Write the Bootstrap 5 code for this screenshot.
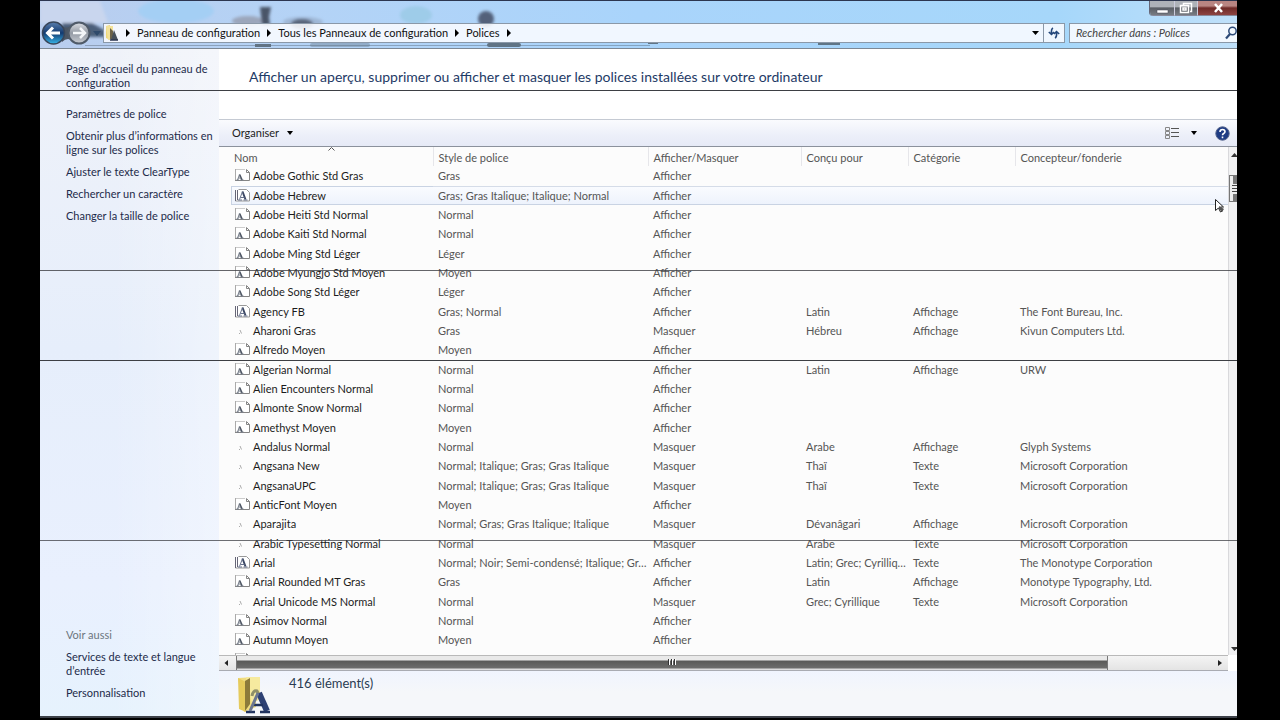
<!DOCTYPE html>
<html lang="fr">
<head>
<meta charset="utf-8">
<meta name="viewport" content="width=device-width, initial-scale=1">
<title>Polices</title>
<link href="https://cdn.jsdelivr.net/npm/bootstrap@5.3.0/dist/css/bootstrap.min.css" rel="stylesheet">
<style>
  body { background: #000; font-family: Lato, "Open Sans", sans-serif; font-size: 11px; line-height: 14px; color: #1c1c1c; }
  a { color: #1d2b4a; text-decoration: none; }
  a:hover { text-decoration: underline; }
  svg { display: block; flex: none; }
  button { border: 0; background: none; padding: 0; color: inherit; }
  .stage { padding: 0 43px 0 40px; }
  .win { background: #fff; border-top: 1px solid #2c3650; border-bottom: 2px solid #3c4048; margin-bottom: 2px; min-height: 0; }
  .fit { min-height: 0; min-width: 0; }
  .win-top { background: linear-gradient(90deg, #b9cdee 0, #b4d3f6 22%, #a9d4fb 50%, #a6d7fa 85%, #bfe0fa 100%); border-bottom: 1px solid #7d8894; padding: 22px 0 5px; }
  .aero { inset: 0; width: 100%; height: 100%; }
  .caption { top: 0; right: 0; height: 15px; border-left: 1px solid #667; border-radius: 0 0 0 4px; overflow: hidden; }
  .caption button { border-right: 1px solid #ccd; border-bottom: 1px solid #889; background: linear-gradient(#aeb2b8 0 40%, #5b5f66 50%, #777b82); width: 25px; }
  .caption .mid { width: 23px; }
  .caption .close { width: 39px; border-right: 0; background: linear-gradient(#b98582 0 35%, #6f2a28 50%, #8d4441); }
  .bar { height: 20px; background: rgba(250, 252, 255, .88); border: 1px solid #8a98a8; }
  .crumbs { gap: 7px; margin: 0; padding: 0; list-style: none; }
  .crumbs a { color: #111; }
  .crumbs li { gap: 7px; }
  .go { width: 21px; border-left: 1px solid #8a98a8; }
  .search { width: 168px; border-right: 0; }
  .search input { border: 0; background: none; min-width: 0; padding: 0 0 0 6px; font-style: italic; color: #444; outline: 0; }
  .search input::placeholder { color: #444; opacity: 1; }
  .side { width: 179px; padding: 13px 6px 16px 26px; background: linear-gradient(90deg, rgba(255,255,255,0) 40%, rgba(255,255,255,.35)), linear-gradient(#eff2f9, #e6eefb 45%, #e9f0fe 80%, #e6f2fd); }
  .side nav { gap: 8px; }
  .home { margin-bottom: 9px; }
  .heading { font-size: 14px; line-height: 20px; color: #1e3a66; margin: 0; padding: 18px 30px 32px; font-weight: 400; }
  .tools { height: 29px; border-top: 1px solid #c5cad3; border-bottom: 1px solid #8b919c; background: linear-gradient(#fafbfe, #eceff9 60%, #e6eaf6); padding: 0 7px 0 13px; }
  .help { margin-left: 14px; }
  .view { background: #fcfcfc; }
  .fonts { table-layout: fixed; width: 100%; }
  .fonts th { height: 19px; padding: 3px 0 0 5px; font-weight: 400; color: #555; border-right: 1px solid #e6e6ea; line-height: 14px; position: relative; }
  .fonts th:last-child { border-right: 0; }
  .fonts th:first-child { padding-left: 15px; }
  .fonts td { height: 19px; padding: 0 0 0 5px; color: #555; white-space: nowrap; overflow: hidden; text-overflow: ellipsis; line-height: 14px; vertical-align: middle; }
  .fonts tbody tr:nth-child(3n+1) td { height: 20px; }
  .fonts td:first-child { padding-left: 16px; color: #1c1c1c; }
  .fonts .hot td { background: linear-gradient(#fafcff, #edf2fc); box-shadow: inset 0 1px #d5dce8, inset 0 -1px #c9d3e3; }
  .fonts .hot td:first-child { background: linear-gradient(#fafcff, #edf2fc) 12px 0 no-repeat; box-shadow: none; }
  .hot .cell { margin-left: -4px; padding-left: 3px; border: 1px solid #c9d3e3; border-width: 1px 0 1px 1px; height: 19px; }
  .cell { gap: 3px; }
  .c1 { width: 214px; } .c2 { width: 215px; } .c3 { width: 153px; } .c4, .c5 { width: 107px; }
  .sort { left: 109px; top: 0; }
  .vbar { width: 9px; background: #f1f1f2; border-left: 1px solid #d9d9dc; padding: 6px 0 4px; overflow: hidden; }
  .vthumb { height: 27px; margin-top: 18px; border: 1px solid #777; border-right: 0; background: linear-gradient(90deg, #eee 40%, #777 50%); }
  .hbar { height: 16px; border-top: 1px solid #b9b9b9; border-bottom: 1px solid #a9abb2; background: linear-gradient(#f4f4f4, #e4e4e4); margin-right: 9px; }
  .hthumb { width: 872px; height: 14px; background: linear-gradient(#e9e9e9 0 4px, #5a5a58 5px, #6d6d6c 12px, #ddd 13px); border: solid #777; border-width: 0 1px; }
  .details { background: linear-gradient(#f0f4fe, #f5f7fa 45%); padding: 3px 18px 0; gap: 18px; height: 46px; font-size: 13px; color: #2a3c52; line-height: 18px; }
  .scan { left: 40px; right: 43px; height: 1px; background: #3d3f44; }
  .scan-a { top: 12.5%; } .scan-b { top: 37.5%; opacity: .8; } .scan-c { top: 50%; } .scan-d { top: 75%; opacity: .75; }
  .pointer { top: 197px; right: 12px; }
</style>
</head>
<body>
<div class="stage vh-100 d-flex flex-column position-relative">
<div class="win position-relative flex-fill d-flex flex-column overflow-hidden">

  <header class="win-top position-relative">
    <svg class="aero position-absolute" viewBox="0 0 1197 47" preserveAspectRatio="none" aria-hidden="true">
      <defs><filter id="soft" x="-30%" y="-30%" width="160%" height="160%"><feGaussianBlur stdDeviation="1.6"/></filter></defs>
      <g filter="url(#soft)">
        <path d="M0 0h60l8 22H0z" fill="#c9d6ee"/>
        <ellipse cx="136" cy="10" rx="38" ry="12" fill="#a4cff4"/>
        <ellipse cx="208" cy="20" rx="16" ry="5" fill="#9ba6bb"/>
        <path d="M220 6h11l-2 10 1 8h-8z" fill="#4a5468"/>
        <ellipse cx="263" cy="21" rx="20" ry="5" fill="#8fa4c0" opacity=".6"/>
        <ellipse cx="262" cy="23" rx="11" ry="5" fill="#58657a"/>
        <circle cx="446" cy="18" r="8" fill="#53617a"/>
        <ellipse cx="376" cy="14" rx="16" ry="9" fill="#93c7e0" opacity=".6"/>
        <path d="M22 22h30l14 8v6H22z" fill="#4c5f7a"/>
      </g>
      <g fill="#47545f" opacity=".75">
        <path d="M215 43h16v3h-16z"/>
        <rect x="45" y="44" width="565" height="1" opacity=".5"/>
        <rect x="447" y="42" width="34" height="4" rx="2"/>
        <rect x="608" y="41" width="10" height="2"/><rect x="778" y="41" width="22" height="3"/>
        <rect x="270" y="42" width="60" height="4" rx="2" opacity=".4"/>
      </g>
    </svg>
    <div class="caption position-absolute d-flex">
      <button type="button" aria-label="Réduire"><svg width="24" height="14"><path d="M7 9h11v3H7z" fill="#fff" stroke="#445" stroke-width=".5"/></svg></button>
      <button type="button" class="mid" aria-label="Restaurer"><svg width="22" height="14"><g fill="none" stroke="#fff" stroke-width="1.5"><path d="M8.500 4V2.500h8v8H15"/><rect x="5.500" y="4.500" width="8" height="7"/><path d="M8 7h3v2H8z"/></g></svg></button>
      <button type="button" class="close" aria-label="Fermer"><svg width="38" height="14"><path d="M17 3l7 8M24 3l-7 8" stroke="#fff" stroke-width="2.500"/></svg></button>
    </div>
    <div class="position-relative d-flex align-items-center">
      <svg width="63" height="20" overflow="visible" role="img" aria-label="Précédent et suivant">
        <defs><linearGradient id="bk" x2="0" y2="1"><stop offset="0" stop-color="#5b7fae"/><stop offset=".5" stop-color="#123a70"/><stop offset="1" stop-color="#38b6ea"/></linearGradient>
        <linearGradient id="fw" x2="0" y2="1"><stop offset="0" stop-color="#dcdfe4"/><stop offset=".5" stop-color="#949aa4"/><stop offset="1" stop-color="#c8ccd2"/></linearGradient></defs>
        <path d="M22 3q6 4 12-2v18q-6-6-12 0z" fill="#4b5664"/>
        <circle cx="13.500" cy="10" r="11" fill="url(#bk)" stroke="#39465a" stroke-width="1.500"/>
        <path d="M20 10H8M13 4.500L7.500 10l5.500 5.500" fill="none" stroke="#fff" stroke-width="3"/>
        <circle cx="39" cy="10" r="10.500" fill="url(#fw)" stroke="#4f5a68" stroke-width="2"/>
        <path d="M33 10h11M40 5l5 5-5 5" fill="none" stroke="#f4f6f8" stroke-width="2.500"/>
        <path d="M53 8h8l-4 5z" fill="#2f4a6c"/>
      </svg>
      <nav class="bar d-flex align-items-stretch flex-fill" aria-label="Adresse">
        <div class="d-flex align-items-center flex-fill">
          <svg class="me-2" width="14" height="18"><path d="M2 2l4-1v15l-4-2z" fill="#efd878"/><path d="M2 2h7v12l-5 2z" fill="#f3e29a"/><path d="M6 4v11l3 1V7z" fill="#6b624a"/><path d="M7 16l3-10 4 10z" fill="#46505c"/><path d="M6 16h8" stroke="#2b3550" stroke-width="1.500"/></svg>
          <ol class="crumbs d-flex align-items-center">
            <li class="d-flex align-items-center"><svg width="4" height="8"><path d="M0 0l4 4-4 4z"/></svg><a href="#">Panneau de configuration</a></li>
            <li class="d-flex align-items-center"><svg width="4" height="8"><path d="M0 0l4 4-4 4z"/></svg><a href="#">Tous les Panneaux de configuration</a></li>
            <li class="d-flex align-items-center"><svg width="4" height="8"><path d="M0 0l4 4-4 4z"/></svg><a href="#">Polices</a></li>
            <li><svg width="4" height="8"><path d="M0 0l4 4-4 4z"/></svg></li>
          </ol>
          <button type="button" class="ms-auto me-1" aria-label="Emplacements précédents"><svg width="7" height="4"><path d="M0 0h7L3.500 4z"/></svg></button>
        </div>
        <button type="button" class="go d-flex align-items-center justify-content-center" aria-label="Actualiser"><svg width="12" height="12" fill="none" stroke="#24477a" stroke-width="1.600"><path d="M5 1Q3 2 3.500 7M.8 5l2.700 2.500L6 5M7 11q2-1 1.500-6M6 7l2.500-2.500L11.200 7"/></svg></button>
      </nav>
      <label class="bar search d-flex align-items-center ms-1">
        <input class="flex-fill" type="search" placeholder="Rechercher dans : Polices" aria-label="Rechercher dans : Polices">
        <svg width="12" height="14" fill="none" stroke="#2c4a78"><circle cx="7.500" cy="5" r="3.700" stroke-width="1.500"/><path d="M5 8l-4 4.500" stroke-width="2.200"/></svg>
      </label>
    </div>
  </header>

  <div class="d-flex flex-fill fit">
    <aside class="side flex-shrink-0 d-flex flex-column justify-content-between">
      <nav class="d-flex flex-column" aria-label="Tâches">
        <a class="home" href="#">Page d’accueil du panneau de configuration</a>
        <a href="#">Paramètres de police</a>
        <a href="#">Obtenir plus d’informations en ligne sur les polices</a>
        <a href="#">Ajuster le texte ClearType</a>
        <a href="#">Rechercher un caractère</a>
        <a href="#">Changer la taille de police</a>
      </nav>
      <nav class="d-flex flex-column" aria-label="Voir aussi">
        <span class="text-secondary">Voir aussi</span>
        <a href="#">Services de texte et langue d’entrée</a>
        <a href="#">Personnalisation</a>
      </nav>
    </aside>

    <main class="flex-fill d-flex flex-column fit">
      <h1 class="heading">Afficher un aperçu, supprimer ou afficher et masquer les polices installées sur votre ordinateur</h1>
      <div class="tools d-flex align-items-center">
        <button type="button" class="d-flex align-items-center gap-2">Organiser <svg width="6" height="4"><path d="M0 0h6L3 4z"/></svg></button>
        <button type="button" class="ms-auto d-flex align-items-center" aria-label="Affichage">
          <svg width="15" height="12" fill="none" stroke="#555"><path d="M.5.500h4v3h-4zM.5 4.500h4v3h-4zM.5 8.500h4v3h-4z" stroke="#888"/><path d="M6 1.500h8M6 5.500h8M6 9.500h8"/></svg>
          <svg class="ms-2" width="13" height="4"><path d="M3 0h6L6 4z"/></svg>
        </button>
        <button type="button" class="help" aria-label="Aide"><svg width="15" height="15"><circle cx="7.500" cy="7.500" r="6.700" fill="#1f3c84" stroke="#56658c"/><path d="M5 6q0-2.500 2.500-2.500T10 5.800q0 1-1.300 1.700T7.500 9.300M7.500 10.500v1.700" fill="none" stroke="#fff" stroke-width="1.600"/></svg></button>
      </div>
      <div class="view d-flex flex-fill fit">
        <div class="flex-fill overflow-hidden">
          <table class="fonts">
            <colgroup><col class="c1"><col class="c2"><col class="c3"><col class="c4"><col class="c5"><col></colgroup>
            <thead><tr><th scope="col">Nom<svg class="sort position-absolute" width="7" height="4"><path d="M.5 3.500l3-3 3 3" fill="none" stroke="#555"/></svg></th><th scope="col">Style de police</th><th scope="col">Afficher/Masquer</th><th scope="col">Conçu pour</th><th scope="col">Catégorie</th><th scope="col">Concepteur/fonderie</th></tr></thead>
            <tbody id="rows"></tbody>
          </table>
        </div>
        <div class="vbar flex-shrink-0 d-flex flex-column" aria-hidden="true">
          <svg width="8" height="4"><path d="M2 4l3.500-4L9 4z" fill="#333"/></svg>
          <div class="vthumb"><svg width="8" height="25"><path d="M0 8h8v10H0z" fill="#eee"/><path d="M2 9.500h6M2 12.500h6M2 15.500h6" stroke="#444"/></svg></div>
          <svg class="mt-auto" width="8" height="4"><path d="M2 0h7L5.500 4z" fill="#333"/></svg>
        </div>
      </div>
      <div class="hbar d-flex align-items-center" aria-hidden="true">
        <svg width="17" height="8"><path d="M9 1v6L5.500 4z" fill="#222"/></svg>
        <div class="hthumb d-flex justify-content-center"><svg width="9" height="10"><path d="M1.500 3v6M4.500 3v6M7.500 3v6" stroke="#fff"/><path d="M.5 3v6M3.500 3v6M6.500 3v6" stroke="#333"/></svg></div>
        <svg class="ms-auto me-1" width="8" height="8"><path d="M2 1v6l4-3z" fill="#222"/></svg>
      </div>
      <footer class="details d-flex">
        <svg width="34" height="40">
          <path d="M1 4l18-1v30L7 38z" fill="#f0dc80"/><path d="M9 3h14v22l-8 5z" fill="#f6ea9f"/>
          <path d="M1 4l8 4v30l-7-3z" fill="#e6cb5c"/><path d="M8 7l5-3v26l-5 7z" fill="#8c7a3a"/>
          <path d="M15 22q1-6 5-5l4 8" fill="none" stroke="#8f8f68" stroke-width="3"/>
          <path d="M22 19l8 18" fill="none" stroke="#2e4173" stroke-width="6"/><path d="M9 38h9M23 38h10M16 31h10" stroke="#22345f" stroke-width="2.500"/><path d="M21 19l-8 18" stroke="#6b7690" stroke-width="3"/>
        </svg>
        <span>416 élément(s)</span>
      </footer>
    </main>
  </div>
  <svg class="pointer position-absolute" width="12" height="16"><path d="M2.500 1.500v11l3-2.500 2 4 2-1-2-4h3z" fill="#fff" stroke="#222"/><path d="M6 8l5 3-2 3-3-3z" fill="#555"/></svg>
</div>
<div class="scan scan-a position-absolute"></div><div class="scan scan-b position-absolute"></div><div class="scan scan-c position-absolute"></div><div class="scan scan-d position-absolute"></div>
</div>

<svg width="0" height="0" class="position-absolute" aria-hidden="true">
  <symbol id="one" viewBox="0 0 15 14"><path d="M.5.500h10l4 3.500v8H.5z" fill="#fff"/><path d="M1 .5h9" stroke="#ccc"/><path d="M.5 0v12" stroke="#aaa"/><path d="M0 11.500h14.500V3.500L11.500.500v3h3" fill="none" stroke="#858585"/><path d="M4.500 5.500l2.500 5.500" fill="none" stroke="#4c5462" stroke-width="1.800"/><path d="M4.500 5.500l-2 5.500M3 9h3M1.500 11h2.500M5.500 11h3" fill="none" stroke="#777e8a"/></symbol>
  <symbol id="many" viewBox="0 0 15 14"><path d="M3.500.500h8l3 3v8.500h-14v-11" fill="#fff" stroke="#999"/><path d="M.5 1v11M2.500 1v10" stroke="#667"/><path d="M7.500 2.500l3 8" fill="none" stroke="#3a4663" stroke-width="2"/><path d="M7.500 2.500l-3 8M5.500 8.500h4M3 11h4M8.500 11h4" fill="none" stroke="#66718c"/></symbol>
  <symbol id="hid" viewBox="0 0 15 14"><path d="M5 6l1.500 3.500M4 9.500h1" fill="none" stroke="#aaa"/></symbol>
</svg>

<script>
  // icon | name | style | visibility | designed for | category | designer
  const data = `one|Adobe Gothic Std Gras|Gras|Afficher
many|Adobe Hebrew|Gras; Gras Italique; Italique; Normal|Afficher
one|Adobe Heiti Std Normal|Normal|Afficher
one|Adobe Kaiti Std Normal|Normal|Afficher
one|Adobe Ming Std Léger|Léger|Afficher
one|Adobe Myungjo Std Moyen|Moyen|Afficher
one|Adobe Song Std Léger|Léger|Afficher
many|Agency FB|Gras; Normal|Afficher|Latin|Affichage|The Font Bureau, Inc.
hid|Aharoni Gras|Gras|Masquer|Hébreu|Affichage|Kivun Computers Ltd.
one|Alfredo Moyen|Moyen|Afficher
one|Algerian Normal|Normal|Afficher|Latin|Affichage|URW
one|Alien Encounters Normal|Normal|Afficher
one|Almonte Snow Normal|Normal|Afficher
one|Amethyst Moyen|Moyen|Afficher
hid|Andalus Normal|Normal|Masquer|Arabe|Affichage|Glyph Systems
hid|Angsana New|Normal; Italique; Gras; Gras Italique|Masquer|Thaï|Texte|Microsoft Corporation
hid|AngsanaUPC|Normal; Italique; Gras; Gras Italique|Masquer|Thaï|Texte|Microsoft Corporation
one|AnticFont Moyen|Moyen|Afficher
hid|Aparajita|Normal; Gras; Gras Italique; Italique|Masquer|Dévanâgari|Affichage|Microsoft Corporation
hid|Arabic Typesetting Normal|Normal|Masquer|Arabe|Texte|Microsoft Corporation
many|Arial|Normal; Noir; Semi-condensé; Italique; Gr…|Afficher|Latin; Grec; Cyrilliq…|Texte|The Monotype Corporation
one|Arial Rounded MT Gras|Gras|Afficher|Latin|Affichage|Monotype Typography, Ltd.
hid|Arial Unicode MS Normal|Normal|Masquer|Grec; Cyrillique|Texte|Microsoft Corporation
one|Asimov Normal|Normal|Afficher
one|Autumn Moyen|Moyen|Afficher
one|`.split("\n");
  document.getElementById("rows").innerHTML = data.map((line, i) => {
    const f = line.split("|");
    const rest = [2, 3, 4, 5, 6].map(k => `<td>${f[k] || ""}</td>`).join("");
    return `<tr${i === 1 ? ' class="hot"' : ""}><td><div class="cell d-flex align-items-center"><svg width="15" height="14"><use href="#${f[0]}"/></svg>${f[1]}</div></td>${rest}</tr>`;
  }).join("");
</script>
<script src="https://cdn.jsdelivr.net/npm/bootstrap@5.3.0/dist/js/bootstrap.bundle.min.js"></script>
</body>
</html>
